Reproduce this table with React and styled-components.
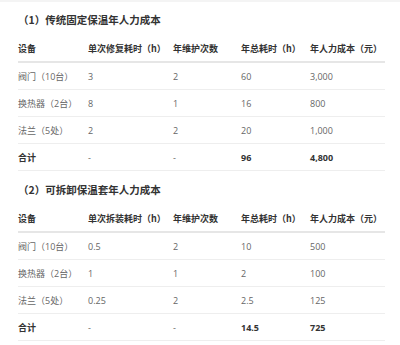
import React from "react";
import styled, { createGlobalStyle } from "styled-components";

const Global = createGlobalStyle`
  html, body { margin: 0; padding: 0; background: #ffffff; }
  body { font-family: "Open Sans", "Noto Sans CJK SC", sans-serif; }
`;

const Page = styled.div`
  width: 400px;
  height: 345px;
  box-sizing: border-box;
  border-top: 2px solid #f4f4f4;
  padding: 9px 15px 0 18px;
  overflow: hidden;
`;

const Title = styled.h3`
  margin: ${(p) => (p.$first ? "0" : "10px")} 0 7px 0;
  font-size: 10.5px;
  line-height: 18px;
  font-weight: 700;
  color: #333333;
  font-family: "Noto Sans CJK SC", sans-serif;
`;

const Table = styled.table`
  width: 367px;
  border-collapse: collapse;
  table-layout: fixed;
  font-size: 9px;
`;

const Th = styled.th`
  text-align: left;
  font-weight: 700;
  color: #333333;
  height: 25px;
  padding: 0;
  border-bottom: 2px solid #e6e6e6;
  font-family: "Noto Sans CJK SC", sans-serif;
  white-space: nowrap;
`;

const Td = styled.td`
  text-align: left;
  color: ${(p) => (p.$bold ? "#333333" : "#666666")};
  font-weight: ${(p) => (p.$bold ? 700 : 400)};
  height: 26px;
  padding: 0;
  border-bottom: 1px solid #eeeeee;
  white-space: nowrap;
`;

const widths = [70, 85, 68, 69, 75];
const heads1 = ["设备", "单次修复耗时（h）", "年维护次数", "年总耗时（h）", "年人力成本（元）"];
const heads2 = ["设备", "单次拆装耗时（h）", "年维护次数", "年总耗时（h）", "年人力成本（元）"];

const rows1 = [
  ["阀门（10台）", "3", "2", "60", "3,000"],
  ["换热器（2台）", "8", "1", "16", "800"],
  ["法兰（5处）", "2", "2", "20", "1,000"],
];
const rows2 = [
  ["阀门（10台）", "0.5", "2", "10", "500"],
  ["换热器（2台）", "1", "1", "2", "100"],
  ["法兰（5处）", "0.25", "2", "2.5", "125"],
];

function CostTable({ heads, rows, total }) {
  return (
    <Table>
      <colgroup>
        {widths.map((w, i) => (
          <col key={i} style={{ width: w }} />
        ))}
      </colgroup>
      <thead>
        <tr>
          {heads.map((h) => (
            <Th key={h}>{h}</Th>
          ))}
        </tr>
      </thead>
      <tbody>
        {rows.map((r) => (
          <tr key={r[0]}>
            {r.map((c, i) => (
              <Td key={i}>{c}</Td>
            ))}
          </tr>
        ))}
        <tr>
          <Td $bold>合计</Td>
          <Td>-</Td>
          <Td>-</Td>
          <Td $bold>{total[0]}</Td>
          <Td $bold>{total[1]}</Td>
        </tr>
      </tbody>
    </Table>
  );
}

export default function App() {
  return (
    <>
      <Global />
      <Page>
        <Title $first>（1）传统固定保温年人力成本</Title>
        <CostTable heads={heads1} rows={rows1} total={["96", "4,800"]} />
        <Title>（2）可拆卸保温套年人力成本</Title>
        <CostTable heads={heads2} rows={rows2} total={["14.5", "725"]} />
      </Page>
    </>
  );
}
